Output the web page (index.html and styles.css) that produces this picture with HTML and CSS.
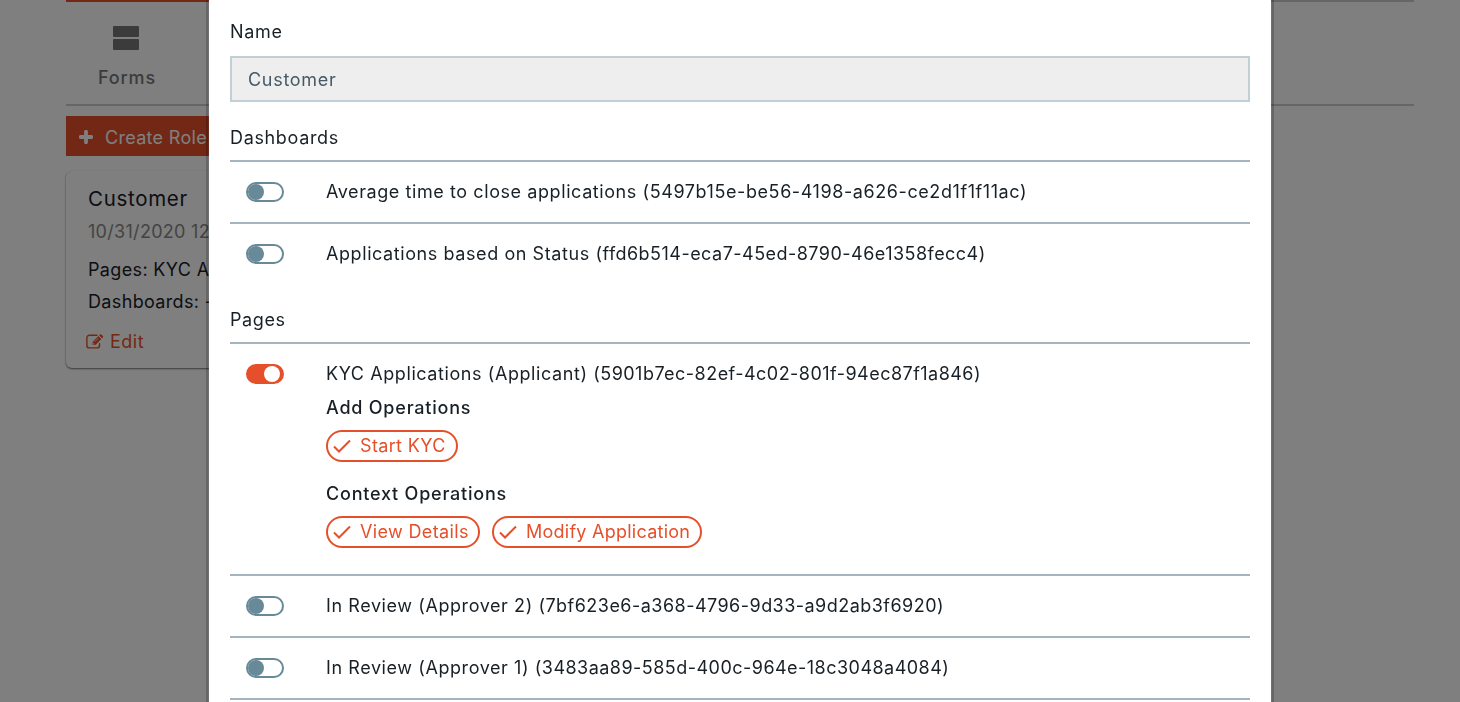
FILE: index.html
```html
<!DOCTYPE html>
<html lang="en">
<head>
<meta charset="utf-8">
<title>Roles</title>
<link rel="stylesheet" href="styles.css">
</head>
<body>
<main class="page">
  <nav class="tabs">
    <div class="tab">
      <svg class="tab-icon" width="26" height="24" viewBox="0 0 26 24"><rect width="26" height="11" rx="1"/><rect y="13" width="26" height="11" rx="1"/></svg>
      <span>Forms</span>
    </div>
  </nav>
  <button class="create">
    <svg width="14" height="14" viewBox="0 0 14 14"><path d="M7 1.7v10.6M1.7 7h10.6" stroke="currentColor" stroke-width="3.8" stroke-linecap="round"/></svg>
    <span>Create Role</span>
  </button>
  <article class="card">
    <h2 class="card-title">Customer</h2>
    <div class="card-date">10/31/2020 12:10</div>
    <div class="card-line">Pages: KYC Applications</div>
    <div class="card-line">Dashboards: -</div>
    <a class="edit">
      <svg width="18" height="16" viewBox="0 0 18 16" fill="none" stroke="currentColor"><path d="M11 1.3H3.4A2.5 2.5 0 0 0 .9 3.8v7.6a2.5 2.5 0 0 0 2.5 2.5H11a2.5 2.5 0 0 0 2.5-2.5V9.6" stroke-width="1.4" stroke-linecap="round"/><path d="M6.5 10.9V8l6-6 2.9 2.9-6 6zM13.2 1.3l.8-.8a1 1 0 0 1 1.3 0l1.6 1.6a1 1 0 0 1 0 1.3l-.8.8z" fill="currentColor" stroke="none"/><path d="M8.6 7.8l4-4M7.2 8.7v1.5h1.5" stroke="#fff" stroke-width=".7"/></svg>
      <span>Edit</span>
    </a>
  </article>
</main>
<div class="overlay">
  <section class="modal">
    <label class="label name-label">Name</label>
    <div class="input">Customer</div>
    <h3 class="label section-label">Dashboards</h3>
    <div class="rows">
      <div class="row"><i class="switch"></i><div>Average time to close applications (5497b15e-be56-4198-a626-ce2d1f1f11ac)</div></div>
      <div class="row"><i class="switch"></i><div>Applications based on Status <span class="id">(ffd6b514-eca7-45ed-8790-46e1358fecc4)</span></div></div>
    </div>
    <h3 class="label pages-label">Pages</h3>
    <div class="rows">
      <div class="row row-open">
        <i class="switch on"></i>
        <div>
          <div>KYC Applications (Applicant) <span class="id">(5901b7ec-82ef-4c02-801f-94ec87f1a846)</span></div>
          <h4 class="ops">Add Operations</h4>
          <div class="chips">
            <span class="chip chip-start"><svg class="check" viewBox="0 0 18 14"><path d="M1 7.5l5 5L17 1.5"/></svg>Start KYC</span>
          </div>
          <h4 class="ops ops-context">Context Operations</h4>
          <div class="chips">
            <span class="chip chip-view"><svg class="check" viewBox="0 0 18 14"><path d="M1 7.5l5 5L17 1.5"/></svg>View Details</span>
            <span class="chip chip-modify"><svg class="check" viewBox="0 0 18 14"><path d="M1 7.5l5 5L17 1.5"/></svg>Modify Application</span>
          </div>
        </div>
      </div>
      <div class="row"><i class="switch"></i><div>In Review (Approver 2) <span class="id">(7bf623e6-a368-4796-9d33-a9d2ab3f6920)</span></div></div>
      <div class="row"><i class="switch"></i><div>In Review (Approver 1) <span class="id">(3483aa89-585d-400c-964e-18c3048a4084)</span></div></div>
      <div class="row"></div>
    </div>
  </section>
</div>
</body>
</html>
```
FILE: styles.css
```css
* { box-sizing: border-box; }
html, body { margin: 0; height: 100%; overflow: hidden; }
body { background: #fff; color: #182026; font: 18px/28px Inter, "Liberation Sans", sans-serif; letter-spacing: .58px; }
h2, h3, h4 { margin: 0; font-size: 18px; font-weight: 400; }
.page { width: 1348px; margin: 0 0 0 66px; }
.tabs { height: 106px; border-top: 2px solid #ccc; border-bottom: 2px solid #ccc; background: #fff; }
.tab { width: 180px; height: 104px; margin-top: -2px; border-top: 2px solid #e5502a; padding: 24px 61px 0 0; display: flex; flex-direction: column; align-items: center; color: #777; font-weight: 500; letter-spacing: .9px; }
.tab span { padding-left: 3px; }
.tab-icon { fill: #777; display: block; margin-bottom: 14px; }
.create { margin: 10px 0 0; width: 160px; height: 40px; border: 0; padding: 3px 0 0 13px; background: #e5502a; color: #fff; display: flex; align-items: center; gap: 12px; font: inherit; letter-spacing: .3px; white-space: nowrap; }
.create svg { margin-top: -2px; }
.card { width: 430px; height: 197px; margin-top: 15px; border-radius: 6px; padding: 14px 22px; background: #fff; box-shadow: 0 1px 2px rgba(0,0,0,.55), 0 0 1px rgba(0,0,0,.1); letter-spacing: .35px; }
.card-title { font-size: 20.5px; line-height: 28px; letter-spacing: .7px; }
.card-date { margin: 5px 0 8px; color: #888; letter-spacing: .3px; }
.card-line { line-height: 32px; }
.edit { display: flex; align-items: center; gap: 6px; height: 28px; margin: 10px 0 0 -2px; color: #e5502a; letter-spacing: .5px; }
.overlay { position: fixed; inset: 0; display: flex; justify-content: center; background: rgba(0,0,0,.5); padding-left: 20px; }
.modal { width: 1062px; height: 702px; padding: 18px 21px 0; background: #fff; overflow: hidden; box-shadow: 0 0 0 1px rgba(255,255,255,.07), 0 0 0 3px rgba(0,0,0,.2); }
.label { display: block; height: 28px; }
.name-label { letter-spacing: .7px; }
.input { height: 46px; margin-top: 10px; border: 2px solid #c1cfd7; padding: 8px 16px 0; background: #eee; color: #465a65; letter-spacing: .7px; }
.section-label { margin: 22px 0 8px; letter-spacing: .65px; }
.rows .row { min-height: 62px; border-top: 2px solid #a4b5c0; padding: 16px 16px 0; display: flex; gap: 42px; white-space: nowrap; }
.id { letter-spacing: .47px; }
.switch { flex: none; width: 38px; height: 20px; margin-top: 4px; border: 2px solid #678998; border-radius: 10px; }
.switch::before { content: ""; display: block; width: 16px; height: 16px; border-radius: 50%; background: #678998; }
.switch.on { border-color: #e5502a; background: #e5502a; }
.switch.on::before { margin-left: 16px; background: #fff; }
.pages-label { margin: 22px 0 8px; }
.rows .row-open { height: 232px; }
.ops { margin-top: 6px; font-weight: 500; letter-spacing: .78px; }
.ops-context { margin-top: 18px; }
.chips { display: flex; gap: 12px; margin-top: 8px; }
.chip { height: 32px; border: 2px solid #e5502a; border-radius: 16px; padding-left: 5px; display: flex; align-items: center; gap: 9px; color: #e5502a; letter-spacing: .35px; }
.chip-start { width: 132px; }
.chip-view { width: 154px; }
.chip-modify { width: 210px; letter-spacing: .25px; }
.check { flex: none; width: 18px; height: 14px; fill: none; stroke: currentColor; stroke-width: 2; }
```
